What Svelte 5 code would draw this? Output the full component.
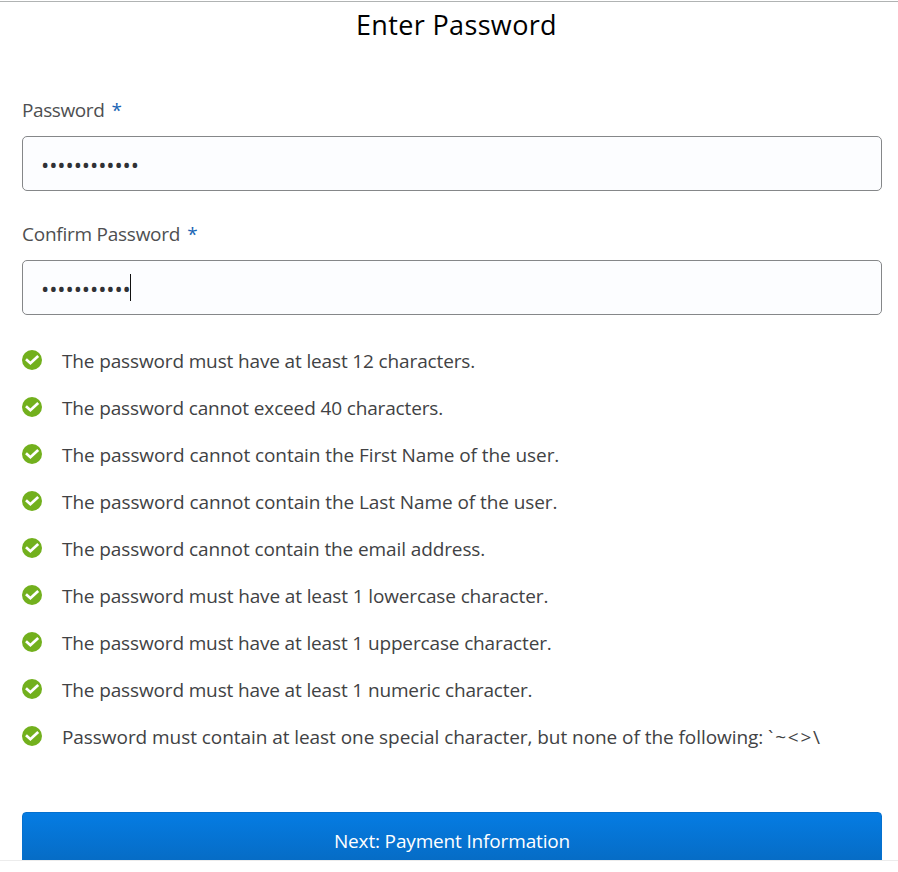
<script>
  const rules = [
    { text: 'The password must have at least 12 characters.', spacing: -0.14 },
    { text: 'The password cannot exceed 40 characters.', spacing: -0.14 },
    { text: 'The password cannot contain the First Name of the user.', spacing: -0.08 },
    { text: 'The password cannot contain the Last Name of the user.', spacing: -0.08 },
    { text: 'The password cannot contain the email address.', spacing: -0.11 },
    { text: 'The password must have at least 1 lowercase character.', spacing: -0.13 },
    { text: 'The password must have at least 1 uppercase character.', spacing: -0.14 },
    { text: 'The password must have at least 1 numeric character.', spacing: -0.14 },
    {
      text: 'Password must contain at least one special character, but none of the following: ',
      symbols: '`~<>\\',
      spacing: -0.06
    }
  ];
  const fields = [
    { label: 'Password', spacing: -0.4, length: 12, focused: false },
    { label: 'Confirm Password', spacing: -0.25, length: 11, focused: true }
  ];
</script>

<main>
  <h1><span>Enter Password</span></h1>
  <form>
    {#each fields as field}
      <div class="field">
        <div class="label">
          <span style="letter-spacing: {field.spacing}px">{field.label}</span><span class="star">*</span>
        </div>
        <div class="input">
          <span class="dots">{'•'.repeat(field.length)}</span>{#if field.focused}<i class="caret"></i>{/if}
        </div>
      </div>
    {/each}
    <ul>
      {#each rules as rule}
        <li>
          <svg width="20" height="20" viewBox="0 0 20 20" aria-hidden="true">
            <circle cx="10" cy="10" r="10" fill="#72b01d" />
            <path d="M4 9.2 8.4 13.2 16.2 5.9" fill="none" stroke="#fff" stroke-width="2.7" />
          </svg>
          <span style="letter-spacing: {rule.spacing}px">{rule.text}{#if rule.symbols}<span class="symbols">{rule.symbols}</span>{/if}</span>
        </li>
      {/each}
    </ul>
    <button type="button">Next: Payment Information</button>
  </form>
</main>

<style>
  :global(body) { background: #fff; }
  main {
    box-sizing: border-box;
    height: 860px;
    overflow: hidden;
    margin-top: 1px;
    border-top: 1px solid #b0b3b3;
    border-bottom: 1px solid #ececec;
    font-family: "Open Sans", "Noto Sans", sans-serif;
    color: #414244;
    font-size: 19px;
  }
  h1 {
    margin: 0;
    padding-left: 15px;
    height: 88px;
    line-height: 46px;
    text-align: center;
    font-size: 27px;
    font-weight: 400;
    letter-spacing: 0.35px;
    color: #000;
  }
  form { margin: 0 16px 0 22px; }
  .field { height: 124px; }
  .label {
    display: flex;
    height: 46px;
    line-height: 40px;
    color: #4e4f51;
  }
  .star { margin-left: 7px; color: #1a65b5; }
  .input {
    box-sizing: border-box;
    display: flex;
    align-items: center;
    height: 55px;
    padding-left: 18px;
    border: 1px solid #858789;
    border-radius: 5px;
    background: #fcfdff;
    color: #303135;
  }
  .dots {
    margin-right: -1px;
    font-size: 22px;
    letter-spacing: -0.11px;
  }
  .caret { width: 1px; height: 27px; background: #111; }
  ul { margin: -1px 0 0; padding: 0; list-style: none; }
  li {
    display: flex;
    align-items: center;
    height: 47px;
    white-space: nowrap;
  }
  li svg { flex: none; margin: 0 20px 2px 0; }
  .symbols { letter-spacing: 1.8px; }
  button {
    display: block;
    width: 100%;
    height: 58px;
    margin-top: 52px;
    padding: 0;
    border: 1px solid #0570ce;
    border-radius: 4px;
    background: linear-gradient(#057ce3, #066cc5 48px);
    color: #fff;
    font: 19px "Open Sans", "Noto Sans", sans-serif;
    letter-spacing: -0.16px;
  }
</style>
